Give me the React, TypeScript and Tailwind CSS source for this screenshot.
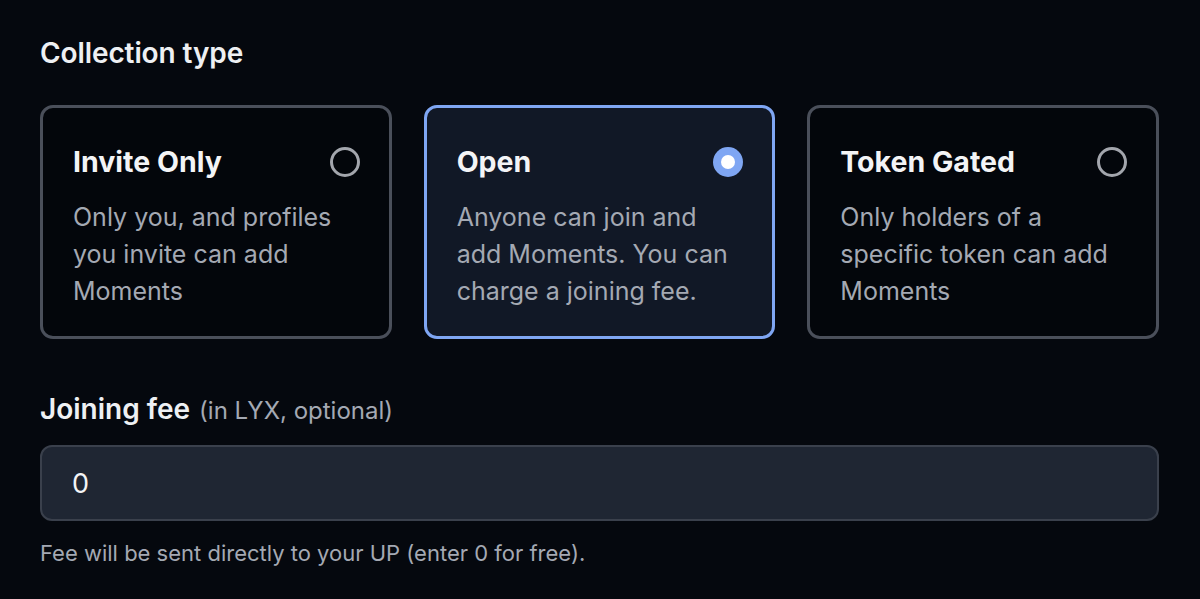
import React, { useState } from 'react';

const options = [
  {
    id: 'invite',
    title: 'Invite Only',
    desc: 'Only you, and profiles you invite can add Moments',
  },
  {
    id: 'open',
    title: 'Open',
    desc: 'Anyone can join and add Moments. You can charge a joining fee.',
  },
  {
    id: 'token',
    title: 'Token Gated',
    desc: 'Only holders of a specific token can add Moments',
  },
];

export default function App() {
  const [selected, setSelected] = useState('open');
  const [fee, setFee] = useState('0');

  return (
    <div className="min-h-[599px] w-full bg-[#05080e] px-10 pt-[34px] font-['Inter','Noto_Sans',sans-serif] text-[#e5e7eb] antialiased">
      {/* Collection type */}
      <h2 className="text-[28px] font-semibold leading-[38px] tracking-[-0.1px] text-[#eef0f3]">
        Collection type
      </h2>

      <div className="mt-[33px] grid w-[1119px] grid-cols-3 gap-[32px]">
        {options.map((o) => {
          const active = selected === o.id;
          return (
            <button
              key={o.id}
              onClick={() => setSelected(o.id)}
              className={`h-[234px] rounded-[13px] border-[3px] pl-[30px] pr-[30px] pt-[9px] text-left ${
                active ? 'border-[#7fa6f3] bg-[#111826]' : 'border-[#4a4f5a] bg-[#03060b]'
              }`}
            >
              <div className="flex items-center justify-between">
                <span className="text-[28.5px] font-bold leading-[36px] text-[#f3f4f6]">{o.title}</span>
                {active ? (
                  <span className="-mr-[1px] flex h-[30px] w-[30px] items-center justify-center rounded-full bg-[#7fa6f3]">
                    <span className="h-[14px] w-[14px] rounded-full bg-white" />
                  </span>
                ) : (
                  <span className="-mr-[1px] h-[30px] w-[30px] rounded-full border-[3px] border-[#a3a6ad]" />
                )}
              </div>
              <p className="mt-[19px] pr-[10px] text-[25px] leading-[37px] text-[#a4a9b3]">{o.desc}</p>
            </button>
          );
        })}
      </div>

      {/* Joining fee */}
      <div className="mt-[52px] flex items-baseline gap-[9px]">
        <span className="text-[28px] font-semibold leading-[36px] text-[#eef0f3]">Joining fee</span>
        <span className="text-[24px] text-[#a4a9b3]">(in LYX, optional)</span>
      </div>

      <input
        value={fee}
        onChange={(e) => setFee(e.target.value)}
        className="mt-[16px] block h-[76px] w-[1119px] rounded-[12px] border-2 border-[#3a404c] bg-[#1f2633] px-[30px] text-[27px] text-[#f3f4f6] outline-none"
      />

      <p className="mt-[17px] text-[22px] leading-[30px] text-[#a4a9b3]">
        Fee will be sent directly to your UP (enter 0 for free).
      </p>
    </div>
  );
}
